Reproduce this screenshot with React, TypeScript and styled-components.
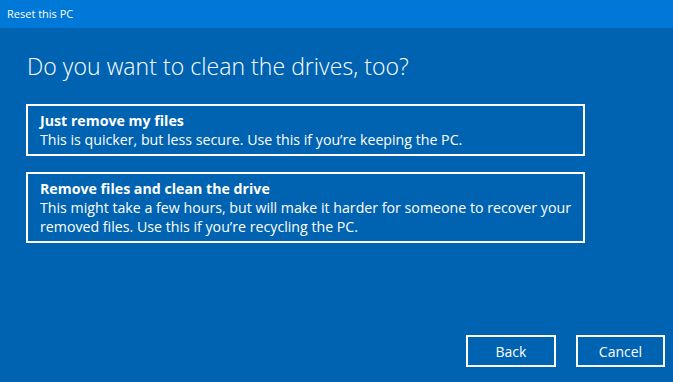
import React from "react";
import styled, { createGlobalStyle } from "styled-components";

const Global = createGlobalStyle`
  html, body { margin: 0; padding: 0; }
  body { width: 673px; height: 382px; overflow: hidden; background: #0063B1; font-family: "Open Sans", "Noto Sans", sans-serif; color: #fff; }
`;

const Window = styled.div`
  width: 673px;
  height: 382px;
  display: flex;
  flex-direction: column;
  background: #0063B1;
`;

const TitleBar = styled.div`
  height: 28px;
  background: #0078D7;
  display: flex;
  align-items: center;
  padding-left: 7px;
  font-size: 11px;
  padding-bottom: 2px;
  box-sizing: border-box;
`;

const Content = styled.div`
  flex: 1;
  display: flex;
  flex-direction: column;
  padding: 23px 88px 15px 26px;
`;

const Heading = styled.h1`
  margin: 0 0 23px 1px;
  font-weight: 300;
  font-size: 23px;
  line-height: 30px;
  letter-spacing: 0.05px;
`;

const Options = styled.div`
  display: flex;
  flex-direction: column;
  gap: 16px;
`;

const Option = styled.button`
  all: unset;
  box-sizing: border-box;
  border: 2px solid #fff;
  padding: 5px 12px 5px 12px;
  display: flex;
  flex-direction: column;
  color: #fff;
`;

const OptionTitle = styled.div`
  font-weight: 700;
  font-size: 14.2px;
  line-height: 19px;
`;

const OptionText = styled.div`
  font-size: 14.2px;
  line-height: 19px;
`;

const Footer = styled.div`
  margin-top: auto;
  display: flex;
  justify-content: flex-end;
  gap: 20px;
  margin-right: -80px;
`;

const Button = styled.button<{ $w?: number }>`
  all: unset;
  box-sizing: border-box;
  width: ${(p) => p.$w ?? 90}px;
  height: 32px;
  border: 2px solid #fff;
  display: flex;
  align-items: center;
  justify-content: center;
  font-size: 14px;
  color: #fff;
`;

export default function App() {
  return (
    <Window>
      <Global />
      <TitleBar>Reset this PC</TitleBar>
      <Content>
        <Heading>Do you want to clean the drives, too?</Heading>
        <Options>
          <Option>
            <OptionTitle>Just remove my files</OptionTitle>
            <OptionText>This is quicker, but less secure. Use this if you’re keeping the PC.</OptionText>
          </Option>
          <Option>
            <OptionTitle>Remove files and clean the drive</OptionTitle>
            <OptionText>This might take a few hours, but will make it harder for someone to recover your removed files. Use this if you’re recycling the PC.</OptionText>
          </Option>
        </Options>
        <Footer>
          <Button>Back</Button>
          <Button $w={89}>Cancel</Button>
        </Footer>
      </Content>
    </Window>
  );
}
